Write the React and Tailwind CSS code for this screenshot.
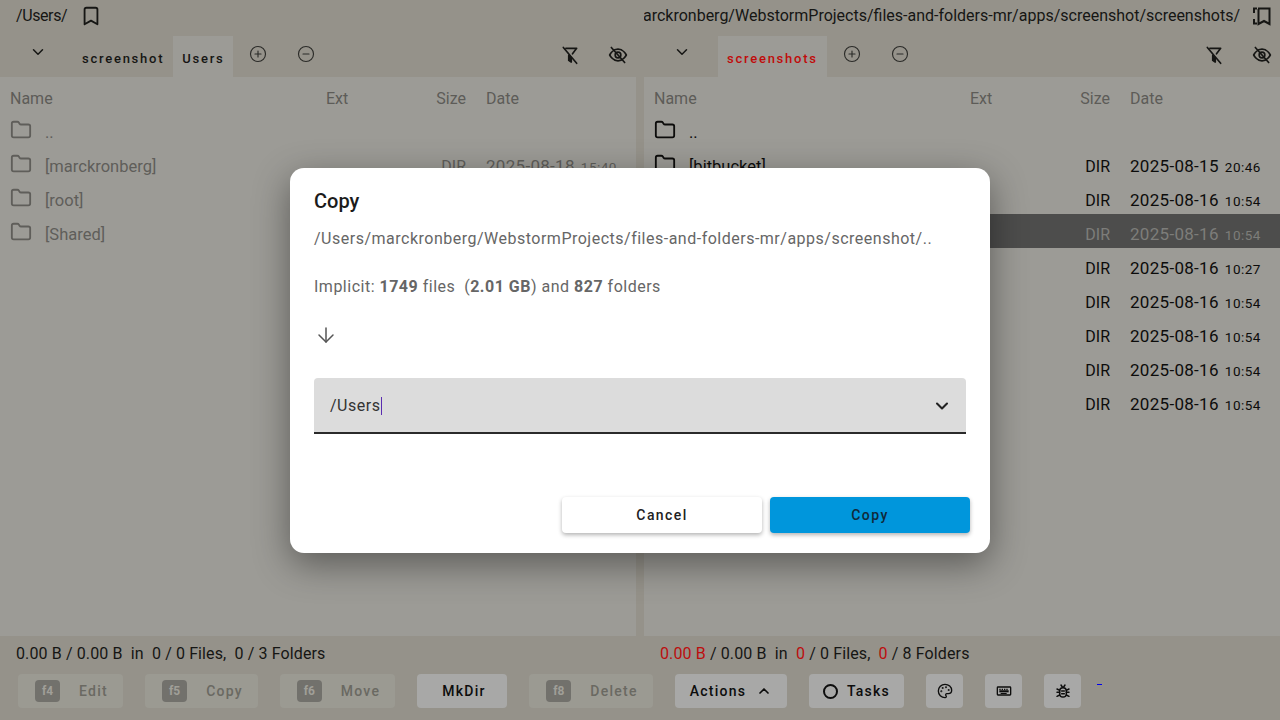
import React from 'react';
import { Bookmark, ChevronDown, ChevronUp, CirclePlus, CircleMinus, ArrowDown, Folder, Palette } from 'lucide-react';

const leftRows = [
  { name: '..' },
  { name: '[marckronberg]', size: 'DIR', date: '2025-08-18', time: '15:40' },
  { name: '[root]' },
  { name: '[Shared]' },
];

const rightRows = [
  { name: '..' },
  { name: '[bitbucket]', size: 'DIR', date: '2025-08-15', time: '20:46' },
  { name: '', size: 'DIR', date: '2025-08-16', time: '10:54' },
  { name: '', size: 'DIR', date: '2025-08-16', time: '10:54', selected: true },
  { name: '', size: 'DIR', date: '2025-08-16', time: '10:27' },
  { name: '', size: 'DIR', date: '2025-08-16', time: '10:54' },
  { name: '', size: 'DIR', date: '2025-08-16', time: '10:54' },
  { name: '', size: 'DIR', date: '2025-08-16', time: '10:54' },
  { name: '', size: 'DIR', date: '2025-08-16', time: '10:54' },
];

const FilterOff = () => (
  <svg width="20" height="20" viewBox="0 0 24 24" fill="none" stroke="currentColor" strokeWidth="2" strokeLinecap="round" strokeLinejoin="round">
    <path d="M7 4h13l-5 6.500" />
    <path d="M10.500 12.500 13.500 16v4.500l-3-2Z" fill="currentColor" />
    <path d="M4 3l16 19" />
  </svg>
);

const EyeSlash = () => (
  <svg width="20" height="20" viewBox="0 0 24 24" fill="none" stroke="currentColor" strokeWidth="2" strokeLinecap="round" strokeLinejoin="round">
    <path d="M2 12s3.600-7 10-7 10 7 10 7-3.600 7-10 7-10-7-10-7Z" />
    <circle cx="12" cy="12" r="3.400" />
    <path d="M4 3l16 18" />
  </svg>
);

const BookmarkFrame = () => (
  <svg width="24" height="24" viewBox="0 0 24 24" fill="none" stroke="currentColor" strokeWidth="2">
    <path d="M4 9V4.500h3M4 15v4.500h3" />
    <path d="M8 4.500h11.500V20L14 17l-5.500 3V5" />
  </svg>
);

const KeyboardIcon = () => (
  <svg width="16" height="16" viewBox="0 0 24 24" fill="currentColor">
    <path fillRule="evenodd" d="M3 5h18a2 2 0 0 1 2 2v10a2 2 0 0 1-2 2H3a2 2 0 0 1-2-2V7a2 2 0 0 1 2-2Zm0 2v10h18V7H3Zm2 1.500h2v2H5v-2Zm3.500 0h2v2h-2v-2Zm3.500 0h2v2h-2v-2Zm3.500 0h2v2h-2v-2Zm2.500 3.500H5v-1h14v1Zm-12 3h10v1.500H7V15Z" />
    <path d="M5 12h14v2H5z" />
  </svg>
);

const BugIcon = () => (
  <svg width="16" height="16" viewBox="0 0 24 24" fill="none" stroke="currentColor" strokeWidth="2.200" strokeLinecap="round">
    <rect x="7" y="7" width="10" height="14" rx="5" />
    <path d="M9 3l2 3M15 3l-2 3M3 9l4 2M21 9l-4 2M3 14h4M21 14h-4M3 20l4-2M21 20l-4-2M10 12h4M10 16h4" />
  </svg>
);

const Row = ({ row, muted }) => (
  <div className={`grid grid-cols-[316px_100px_40px_1fr] h-[34px] pt-2 items-center pl-[10px] ${row.selected ? 'bg-[#4d4d4c] text-[#7d7d7a]' : muted ? 'text-[#5f5e5a]' : 'text-[#0c0c0b]'}`}>
    <div className="flex items-center">
      {row.name && <Folder size={22} strokeWidth={2} className="shrink-0 -mt-[6px]" />}
      <span className="ml-[13px] text-[16.5px]">{row.name}</span>
    </div>
    <div />
    <div className="text-right">{row.size}</div>
    <div className="pl-5 flex items-baseline gap-[6px] text-[17px] tracking-[0.3px]">
      {row.date}
      <span className="text-[13.5px] tracking-[0.5px]">{row.time}</span>
    </div>
  </div>
);

const Pane = ({ rows, muted, children }) => (
  <div className="w-[636px] flex flex-col">
    {children}
    <div className="h-[559px] bg-[#9c9b96]">
      <div className="grid grid-cols-[316px_100px_40px_1fr] h-[35px] pt-2 items-center pl-[10px] text-[#5d5c58]">
        <div>Name</div>
        <div>Ext</div>
        <div className="text-right">Size</div>
        <div className="pl-5">Date</div>
      </div>
      {rows.map((row, i) => (
        <Row key={i} row={row} muted={muted} />
      ))}
    </div>
  </div>
);

const Tab = ({ label, active, red }) => (
  <div className={`h-[41px] flex items-center justify-center px-[9px] text-[13px] font-medium tracking-[1.750px] pt-1 ${active ? 'bg-[#9c9b96]' : ''} ${red ? 'text-[#c00b0b]' : 'text-[#161614]'}`}>
    {label}
  </div>
);

const ToolButton = ({ hotkey, label, width, disabled, children, extra }) => (
  <div className={`h-[34px] rounded flex items-center justify-center gap-[3px] text-sm font-medium tracking-[1.250px] ${extra || ''} ${disabled ? 'bg-[#9b9a92] text-[#6a6962] pl-0.5' : 'bg-[#a8a8a7] text-[#0d0d0d]'}`} style={{ width }}>
    {hotkey && (
      <span className="w-[25px] h-[22px] mr-4 rounded bg-[#72716c] text-[#a09f98] text-xs font-bold flex items-center justify-center tracking-normal">{hotkey}</span>
    )}
    {label}
    {children}
  </div>
);

const TabIcons = () => (
  <div className="flex pt-[9px] pl-4 gap-[30px] text-[#2b2b28]">
    <CirclePlus size={18} strokeWidth={1.500} />
    <CircleMinus size={18} strokeWidth={1.500} />
  </div>
);

const ViewIcons = () => (
  <div className="ml-auto flex pt-[9px] gap-[28px] pr-2">
    <FilterOff />
    <EyeSlash />
  </div>
);

export default function App() {
  return (
    <div className="relative w-[1280px] h-[720px] overflow-hidden bg-[#95928a] text-base font-['Roboto',sans-serif]">
      <div className="flex gap-2 h-[636px]">
        <Pane rows={leftRows} muted>
          <div className="h-9 flex items-center pl-4 text-[#161614] pb-1">
            <span className="tracking-[-0.4px]">/Users/</span>
            <Bookmark size={22} strokeWidth={2} className="ml-[13px]" />
          </div>
          <div className="h-[41px] flex text-[#161614]">
            <div className="w-[73px] flex pl-[29px] pt-[7px]"><ChevronDown size={18} strokeWidth={2} /></div>
            <Tab label="screenshot" />
            <Tab label="Users" active />
            <TabIcons />
            <ViewIcons />
          </div>
        </Pane>
        <Pane rows={rightRows}>
          <div className="h-9 flex items-center text-[#161614] pb-1">
            <div className="flex-1 min-w-0 flex justify-end overflow-hidden">
              <span className="whitespace-nowrap shrink-0">/Users/marckronberg/WebstormProjects/files-and-folders-mr/apps/screenshot/screenshots/</span>
            </div>
            <div className="w-10 pl-[10px] shrink-0"><BookmarkFrame /></div>
          </div>
          <div className="h-[41px] flex text-[#161614]">
            <div className="w-[74px] flex pl-[29px] pt-[7px]"><ChevronDown size={18} strokeWidth={2} /></div>
            <Tab label="screenshots" active red />
            <TabIcons />
            <ViewIcons />
          </div>
        </Pane>
      </div>

      <div className="flex gap-2 h-[38px] text-[#161614] tracking-[0.12px]">
        <div className="w-[636px] pl-4 pt-[6px]">0.00 B / 0.00 B&nbsp; in&nbsp; 0 / 0 Files,&nbsp; 0 / 3 Folders</div>
        <div className="w-[636px] pl-4 pt-[6px]">
          <span className="text-[#bc0e0e]">0.00 B</span> / 0.00 B&nbsp; in&nbsp; <span className="text-[#bc0e0e]">0</span> / 0 Files,&nbsp; <span className="text-[#bc0e0e]">0</span> / 8 Folders
        </div>
      </div>

      <div className="flex items-center gap-[22px] pl-[18px]">
        <ToolButton hotkey="f4" label="Edit" width={105} disabled />
        <ToolButton hotkey="f5" label="Copy" width={113} disabled />
        <ToolButton hotkey="f6" label="Move" width={115} disabled />
        <ToolButton label="MkDir" width={90} extra="pl-1" />
        <ToolButton hotkey="f8" label="Delete" width={124} disabled />
        <ToolButton label="Actions" width={112}><ChevronUp size={16} strokeWidth={2.500} className="ml-[7px]" /></ToolButton>
        <ToolButton width={95}>
          <span className="w-[15px] h-[15px] rounded-full border-2 border-[#0d0d0d] mr-[6px]" />
          Tasks
        </ToolButton>
        <ToolButton width={37}><Palette size={16} strokeWidth={2} /></ToolButton>
        <ToolButton width={37}><KeyboardIcon /></ToolButton>
        <ToolButton width={37}><BugIcon /></ToolButton>
        <div className="w-[5px] h-px bg-[#0000ee] -ml-[6px] -mt-[14px]" />
      </div>

      <div className="absolute left-[290px] top-[168px] w-[700px] h-[385px] bg-white rounded-[14px] pl-6 pr-6 pt-5 shadow-[0_11px_36px_rgba(0,0,0,0.42)]">
        <div className="text-xl font-medium text-[#1b1b1b] leading-[26px]">Copy</div>
        <div className="mt-[15px] tracking-[0.5px] text-[#666] leading-5">/Users/marckronberg/WebstormProjects/files-and-folders-mr/apps/screenshot/..</div>
        <div className="mt-7 tracking-[0.5px] text-[#666] leading-5 whitespace-pre">Implicit: <b>1749</b> files  (<b>2.01 GB</b>) and <b>827</b> folders</div>
        <ArrowDown size={24} strokeWidth={1.500} className="mt-[26px] text-[#555]" />
        <div className="mt-[31px] h-14 w-[652px] bg-[#dcdcdc] rounded-t border-b-2 border-[#2a2a2a] flex items-center pl-4 pr-[14px] pt-px text-[#333]">
          <span className="tracking-[0.5px]">/Users</span>
          <span className="w-px h-[18px] bg-[#5a2db0] ml-px" />
          <ChevronDown size={20} strokeWidth={2.500} className="ml-auto text-[#222]" />
        </div>
        <div className="absolute right-5 bottom-5 flex gap-2">
          <div className="w-[200px] h-9 rounded bg-white shadow-[0_2px_4px_rgba(0,0,0,0.3)] flex items-center justify-center text-sm font-medium tracking-[1.400px] text-[#222]">Cancel</div>
          <div className="w-[200px] h-9 rounded bg-[#0096dc] shadow-[0_2px_4px_rgba(0,0,0,0.3)] flex items-center justify-center text-sm font-medium tracking-[1.400px] text-[#10293a]">Copy</div>
        </div>
      </div>
    </div>
  );
}
